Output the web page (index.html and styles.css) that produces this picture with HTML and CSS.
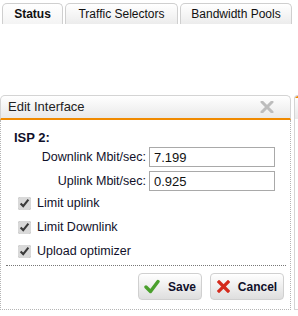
FILE: index.html
```html
<!DOCTYPE html>
<html lang="en">

<head>
    <meta charset="UTF-8">
    <meta name="viewport" content="width=device-width, initial-scale=1.0">
    <title>Edit Interface</title>
    <link rel="stylesheet" href="styles.css">
</head>

<body>
    <div class="tabs">
        <div class="tab">Status</div>
        <div class="tab">Traffic Selectors</div>
        <div class="tab">Bandwidth Pools</div>
    </div>

    <div class="stage">
        <div class="dialog">
            <div class="dialog-header">
                <span>Edit Interface</span>
                <svg class="close" width="14" height="12" viewBox="0 0 14 12">
                    <path d="M2 1 L12 11 M12 1 L2 11" stroke="#bdbdbd" stroke-width="3" stroke-linecap="round"/>
                </svg>
            </div>
            <div class="dialog-body">
                <h3>ISP 2:</h3>
                <div class="field">
                    <label for="downlink">Downlink Mbit/sec:</label>
                    <input type="text" id="downlink" value="7.199">
                </div>
                <div class="field">
                    <label for="uplink">Uplink Mbit/sec:</label>
                    <input type="text" id="uplink" value="0.925">
                </div>
                <label class="check"><input type="checkbox" checked> Limit uplink</label>
                <label class="check"><input type="checkbox" checked> Limit Downlink</label>
                <label class="check"><input type="checkbox" checked> Upload optimizer</label>
                <div class="actions">
                    <button class="btn save">
                        <svg width="16" height="15" viewBox="0 0 16 15">
                            <path d="M2 8 L6.5 12.5 L14 2.5" fill="none" stroke="#4aa02c" stroke-width="3.4" stroke-linecap="round" stroke-linejoin="round"/>
                        </svg>
                        Save
                    </button>
                    <button class="btn cancel">
                        <svg width="13" height="13" viewBox="0 0 13 13">
                            <path d="M2 2 L11 11 M11 2 L2 11" stroke="#d42a1c" stroke-width="3.2" stroke-linecap="square"/>
                        </svg>
                        Cancel
                    </button>
                </div>
            </div>
        </div>
        <div class="dialog-edge"></div>
    </div>
</body>

</html>
```

FILE: styles.css
```css
* {
    margin: 0;
    padding: 0;
    box-sizing: border-box;
}

html,
body {
    height: 316px;
    overflow: hidden;
}

body {
    font-family: 'Liberation Sans', Arial, sans-serif;
    font-size: 12.5px;
    color: #10102a;
    background-color: #fff;
}

/* Tabs */
.tabs {
    display: flex;
    gap: 2px;
    padding: 3px 0 0 2px;
}

.tab {
    height: 21px;
    line-height: 20px;
    font-size: 12px;
    text-align: center;
    white-space: nowrap;
    border: 1px solid #cfcfcf;
    border-bottom: none;
    border-radius: 5px 5px 0 0;
    background: linear-gradient(#ffffff, #ececec);
    color: #111;
}

.tab:nth-child(1) {
    width: 61px;
    font-weight: bold;
    background: linear-gradient(#ffffff, #f4f4f4);
}

.tab:nth-child(2) {
    width: 113px;
}

.tab:nth-child(3) {
    width: 112px;
}

/* Dialog */
.stage {
    display: flex;
    gap: 3px;
    margin-top: 71px;
}

.dialog {
    width: 291px;
    flex-shrink: 0;
}

.dialog-header {
    height: 25px;
    display: flex;
    justify-content: space-between;
    align-items: center;
    padding: 0 16px 1px 7px;
    border: 1px solid #d4d4d4;
    border-bottom: 2px solid #f08a00;
    border-radius: 5px 5px 0 0;
    background: linear-gradient(#ffffff, #e9e9e9);
    font-size: 13px;
    color: #222;
}

.dialog-body {
    border: 1px dotted #b5b5b5;
    border-top: none;
    padding: 10px 4px 9px 13px;
}

.dialog-body h3 {
    font-size: 13px;
    margin-bottom: 2px;
}

.field {
    display: flex;
    align-items: center;
    justify-content: flex-end;
    padding-right: 11px;
}

.field + .field {
    margin-top: 4px;
}

.field label {
    margin-right: 3px;
}

.field input {
    width: 126px;
    height: 20px;
    border: 1px solid #a9a9a9;
    padding: 0 4px;
    font-family: inherit;
    font-size: 13px;
    color: #111;
}

.check {
    display: flex;
    align-items: center;
    height: 24px;
    padding-left: 4px;
}

.check input {
    width: 13px;
    height: 13px;
    margin-right: 6px;
    accent-color: #d9d9d9;
}

.actions {
    display: flex;
    justify-content: flex-end;
    gap: 8px;
    margin-top: 2px;
    margin-left: -8px;
    padding: 7px 2px 0 0;
    border-top: 1px dotted #777;
}

.btn {
    height: 27px;
    display: flex;
    align-items: center;
    justify-content: center;
    gap: 8px;
    border: 1px solid #d0d0d0;
    border-radius: 4px;
    background: linear-gradient(#ffffff, #dedede);
    font-family: inherit;
    font-size: 12px;
    font-weight: bold;
    color: #10102a;
}

.btn.save {
    width: 64px;
}

.btn.cancel {
    width: 74px;
}

.dialog-edge {
    width: 10px;
    height: 215px;
    border: 1px solid #d4d4d4;
    border-right: none;
    border-radius: 5px 0 0 0;
    background: linear-gradient(#ffffff, #e9e9e9) top / 100% 23px no-repeat;
    box-shadow: inset 0 23px 0 -21px #f08a00;
}
```
